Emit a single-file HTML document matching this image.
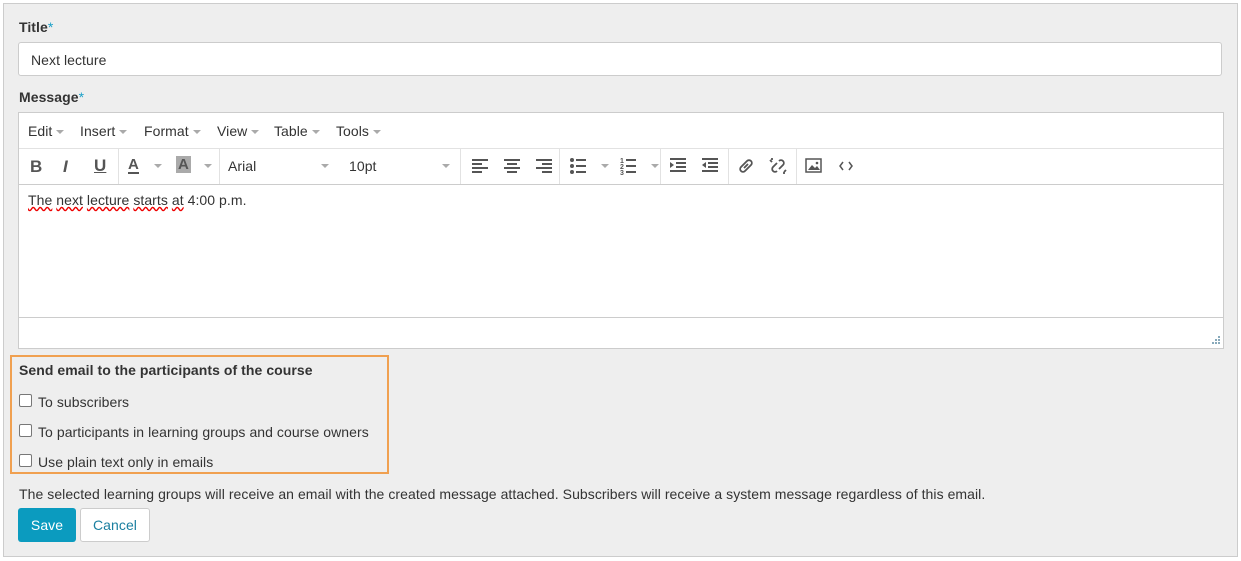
<!DOCTYPE html>
<html><head><style>
body{margin:0;width:1241px;height:561px;background:#fff;font-family:"Liberation Sans",Arial,sans-serif;font-size:14px;color:#333;position:relative;overflow:hidden;letter-spacing:0.06px}
.a{position:absolute}
.panel{left:3px;top:3px;width:1233px;height:552px;background:#eee;border:1px solid #ccc}
label.b{font-weight:bold;font-size:14px}
.star{color:#1aa0c8;font-weight:normal}
.inp{left:18px;top:42px;width:1202px;height:32px;background:#fff;border:1px solid #ccc;border-radius:3px}
.ed{left:18px;top:112px;width:1204px;height:235px;background:#fff;border:1px solid #ccc}
.menu span{position:absolute;top:10px;color:#333}
.car{display:inline-block;width:0;height:0;border-left:4px solid transparent;border-right:4px solid transparent;border-top:4px solid #aaa;margin-left:4px;vertical-align:middle}
.tb{top:35px;left:0;width:1204px;height:35px;border-top:1px solid #e2e2e2;border-bottom:1px solid #ccc}
.sep{position:absolute;top:0;width:1px;height:35px;background:#e2e2e2}
.ic{position:absolute;top:9px}
.cb{width:11px;height:11px;border:1px solid #777;background:#fff;border-radius:2px}
</style></head><body>
<div class="a panel"></div>
<label class="a b" style="left:19px;top:19px">Title<span class="star">*</span></label>
<div class="a inp"><span class="a" style="left:12px;top:9px">Next lecture</span></div>
<label class="a b" style="left:19px;top:89px">Message<span class="star">*</span></label>
<div class="a ed">
 <div class="menu">
  <span style="left:9px">Edit<i class="car"></i></span>
  <span style="left:61px">Insert<i class="car"></i></span>
  <span style="left:125px">Format<i class="car"></i></span>
  <span style="left:198px">View<i class="car"></i></span>
  <span style="left:255px">Table<i class="car"></i></span>
  <span style="left:317px">Tools<i class="car"></i></span>
 </div>
 <div class="a tb">
  <span class="ic" style="left:11px;top:8px;font-weight:bold;font-size:17px;color:#555">B</span>
  <span class="ic" style="left:44px;top:8px;font-style:italic;font-weight:bold;font-size:17px;color:#555">I</span>
  <span class="ic" style="left:75px;top:7px;text-decoration:underline;font-size:17px;color:#555;font-weight:bold">U</span>
  <div class="sep" style="left:99px"></div>
  <span class="ic" style="left:109px;top:8px;font-size:15px;color:#555;border-bottom:2px solid #555;line-height:15px;font-weight:bold">A</span><i class="car a" style="left:131px;top:15px"></i>
  <span class="ic" style="left:157px;top:7px;font-size:15px;color:#555;background:#aaa;padding:0 2px;line-height:17px;font-weight:bold">A</span><i class="car a" style="left:181px;top:15px"></i>
  <div class="sep" style="left:200px"></div>
  <span class="ic" style="left:209px;color:#333">Arial</span><i class="car a" style="left:298px;top:15px"></i>
  <span class="ic" style="left:330px;color:#333">10pt</span><i class="car a" style="left:419px;top:15px"></i>
  <div class="sep" style="left:441px"></div>
  <svg class="a" style="left:450px;top:8px" width="180" height="18" fill="#555">
   <rect x="3" y="2" width="16" height="2"/><rect x="3" y="6" width="10" height="2"/><rect x="3" y="10" width="16" height="2"/><rect x="3" y="14" width="10" height="2"/>
   <rect x="35" y="2" width="16" height="2"/><rect x="38" y="6" width="10" height="2"/><rect x="35" y="10" width="16" height="2"/><rect x="38" y="14" width="10" height="2"/>
   <rect x="67" y="2" width="16" height="2"/><rect x="73" y="6" width="10" height="2"/><rect x="67" y="10" width="16" height="2"/><rect x="73" y="14" width="10" height="2"/>
   <circle cx="103" cy="3" r="2"/><circle cx="103" cy="9" r="2"/><circle cx="103" cy="15" r="2"/><rect x="107" y="2" width="10" height="2"/><rect x="107" y="8" width="10" height="2"/><rect x="107" y="14" width="10" height="2"/>
  </svg>
  <i class="car a" style="left:578px;top:15px"></i><i class="car a" style="left:628px;top:15px"></i>
  <div class="sep" style="left:540px"></div>
  <div class="sep" style="left:641px"></div>
  <div class="sep" style="left:709px"></div>
  <div class="sep" style="left:777px"></div>
  <svg class="a" style="left:601px;top:8px" width="20" height="18" fill="#555"><text x="0" y="6" font-size="7" font-weight="bold" font-family="Liberation Sans">1</text><text x="0" y="12" font-size="7" font-weight="bold" font-family="Liberation Sans">2</text><text x="0" y="18" font-size="7" font-weight="bold" font-family="Liberation Sans">3</text><rect x="6" y="2" width="10" height="2"/><rect x="6" y="8" width="10" height="2"/><rect x="6" y="14" width="10" height="2"/></svg>
  <svg class="a" style="left:650px;top:8px" width="60" height="18" fill="#555">
   <rect x="1" y="1" width="16" height="2"/><rect x="7" y="5" width="10" height="2"/><rect x="7" y="9" width="10" height="2"/><rect x="1" y="13" width="16" height="2"/><path d="M1 5l4 3-4 3z"/>
   <rect x="33" y="1" width="16" height="2"/><rect x="39" y="5" width="10" height="2"/><rect x="39" y="9" width="10" height="2"/><rect x="33" y="13" width="16" height="2"/><path d="M37 5l-4 3 4 3z"/>
  </svg>
  <svg class="a" style="left:718px;top:8px" width="60" height="18" fill="none" stroke="#555" stroke-width="1.8">
   <path d="M8 6l-4 4a2.5 2.5 0 0 0 4 4l2-2M10 12l4-4a2.5 2.5 0 0 0-4-4l-2 2M7 11l4-4"/>
   <path d="M40 6l-4 4a2.5 2.5 0 0 0 4 4M42 12l4-4a2.5 2.5 0 0 0-4-4M33 3l2 2M47 15l2-2M35 1v2M47 17v-2"/>
  </svg>
  <svg class="a" style="left:786px;top:8px" width="60" height="18">
   <rect x="1" y="2" width="15" height="13" fill="none" stroke="#555" stroke-width="1.5"/><path d="M3 13l4-5 3 3 2-2 3 4z" fill="#555"/><circle cx="12" cy="6" r="1.3" fill="#555"/>
   <path d="M38 5l-3 4 3 4M44 5l3 4-3 4" fill="none" stroke="#555" stroke-width="1.5"/>
  </svg>
 </div>
 <div class="a" style="left:9px;top:79px;color:#333">
  <span style="text-decoration:underline wavy #e00">The</span> <span style="text-decoration:underline wavy #e00">next</span> <span style="text-decoration:underline wavy #e00">lecture</span> <span style="text-decoration:underline wavy #e00">starts</span> <span style="text-decoration:underline wavy #e00">at</span> 4:00 p.m.</div>
 <div class="a" style="left:0;top:204px;width:1204px;border-top:1px solid #ccc;height:30px"></div>
 <svg class="a" style="left:1193px;top:223px" width="9" height="9" fill="#8ab"><rect x="6" y="0" width="2" height="2"/><rect x="3" y="3" width="2" height="2"/><rect x="6" y="3" width="2" height="2"/><rect x="0" y="6" width="2" height="2"/><rect x="3" y="6" width="2" height="2"/><rect x="6" y="6" width="2" height="2"/></svg>
</div>
<div class="a" style="left:10px;top:355px;width:375px;height:115px;border:2px solid #f0a050"></div>
<label class="a b" style="left:19px;top:362px">Send email to the participants of the course</label>
<div class="a cb" style="left:19px;top:394px"></div><span class="a" style="left:38px;top:394px">To subscribers</span>
<div class="a cb" style="left:19px;top:424px"></div><span class="a" style="left:38px;top:424px">To participants in learning groups and course owners</span>
<div class="a cb" style="left:19px;top:454px"></div><span class="a" style="left:38px;top:454px">Use plain text only in emails</span>
<span class="a" style="left:19px;top:486px">The selected learning groups will receive an email with the created message attached. Subscribers will receive a system message regardless of this email.</span>
<div class="a" style="left:18px;top:508px;width:58px;height:34px;background:#0b9bbf;border-radius:3px;color:#fff;text-align:center;line-height:34px">Save</div>
<div class="a" style="left:80px;top:508px;width:68px;height:32px;background:#fff;border:1px solid #ccc;border-radius:3px;color:#1a7fa0;text-align:center;line-height:32px">Cancel</div>
</body></html>
